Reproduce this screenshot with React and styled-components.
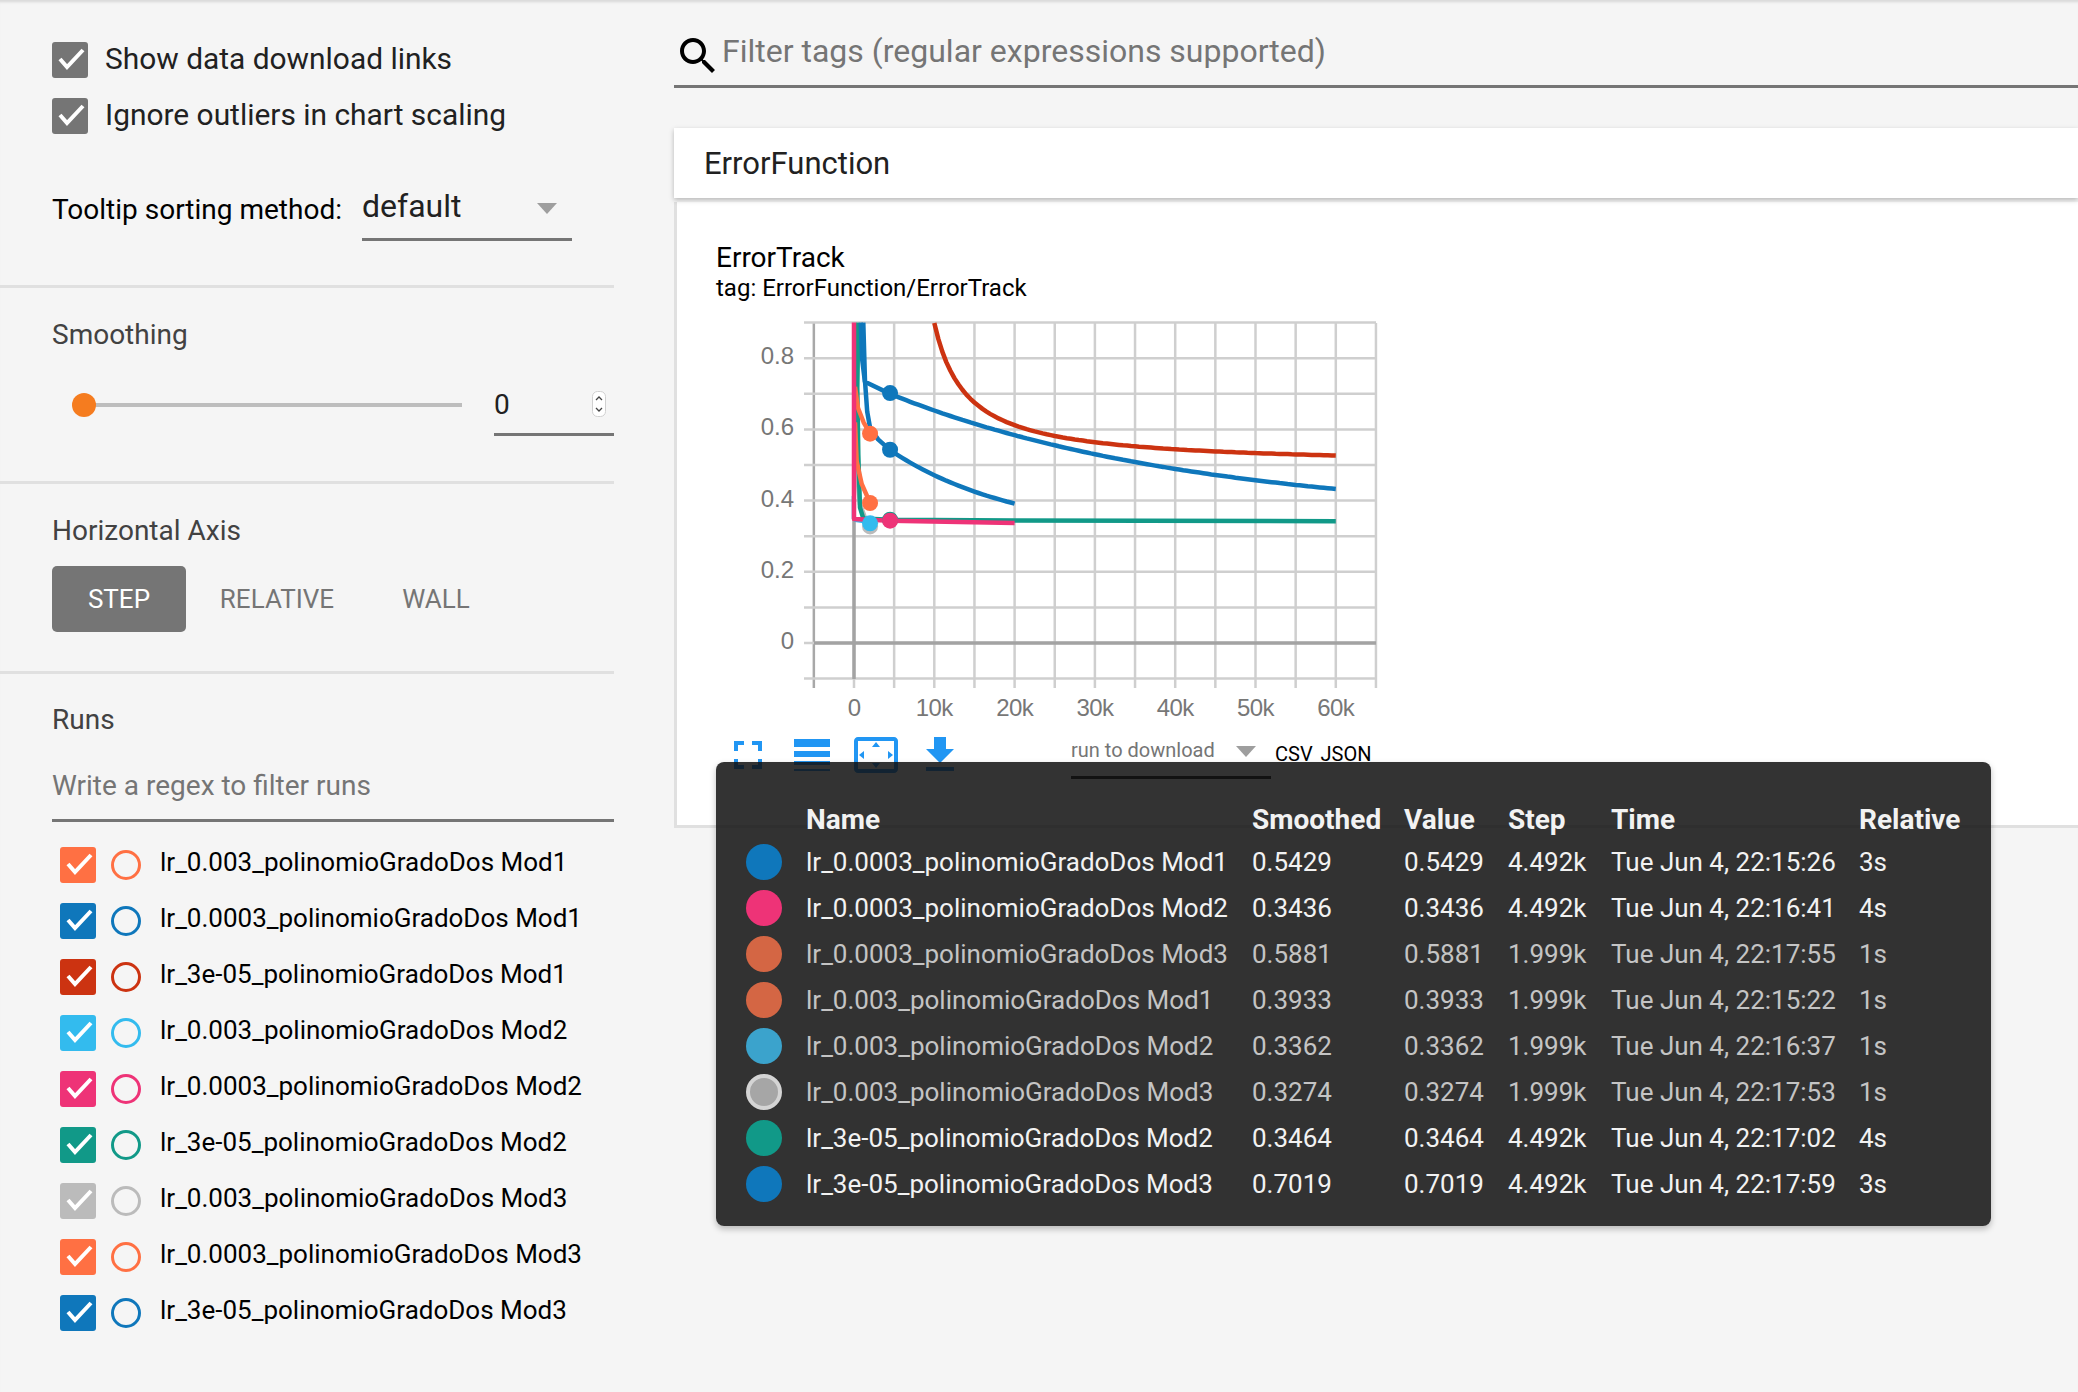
import React from 'react';
import styled, { createGlobalStyle } from 'styled-components';

const GlobalStyle = createGlobalStyle`
  html, body { margin: 0; padding: 0; background: #f5f5f5; overflow: hidden; }
  * { box-sizing: border-box; }
  body { font-family: Roboto, "Liberation Sans", sans-serif; }
`;

const COLORS = {
  orange: '#ff7043',
  blue: '#0f77bb',
  red: '#cc3311',
  sky: '#33bbee',
  pink: '#ee3377',
  teal: '#119988',
  grey: '#bbbbbb',
};

const RUNS = [
  ['lr_0.003_polinomioGradoDos Mod1', COLORS.orange],
  ['lr_0.0003_polinomioGradoDos Mod1', COLORS.blue],
  ['lr_3e-05_polinomioGradoDos Mod1', COLORS.red],
  ['lr_0.003_polinomioGradoDos Mod2', COLORS.sky],
  ['lr_0.0003_polinomioGradoDos Mod2', COLORS.pink],
  ['lr_3e-05_polinomioGradoDos Mod2', COLORS.teal],
  ['lr_0.003_polinomioGradoDos Mod3', COLORS.grey],
  ['lr_0.0003_polinomioGradoDos Mod3', COLORS.orange],
  ['lr_3e-05_polinomioGradoDos Mod3', COLORS.blue],
];

const ROWS = [
  { color: '#0f77bb', name: 'lr_0.0003_polinomioGradoDos Mod1', smoothed: '0.5429', value: '0.5429', step: '4.492k', time: 'Tue Jun 4, 22:15:26', rel: '3s' },
  { color: '#ee3377', name: 'lr_0.0003_polinomioGradoDos Mod2', smoothed: '0.3436', value: '0.3436', step: '4.492k', time: 'Tue Jun 4, 22:16:41', rel: '4s' },
  { color: '#d46644', dim: true, name: 'lr_0.0003_polinomioGradoDos Mod3', smoothed: '0.5881', value: '0.5881', step: '1.999k', time: 'Tue Jun 4, 22:17:55', rel: '1s' },
  { color: '#d46644', dim: true, name: 'lr_0.003_polinomioGradoDos Mod1', smoothed: '0.3933', value: '0.3933', step: '1.999k', time: 'Tue Jun 4, 22:15:22', rel: '1s' },
  { color: '#3ba3cc', dim: true, name: 'lr_0.003_polinomioGradoDos Mod2', smoothed: '0.3362', value: '0.3362', step: '1.999k', time: 'Tue Jun 4, 22:16:37', rel: '1s' },
  { color: '#a6a6a6', ring: true, dim: true, name: 'lr_0.003_polinomioGradoDos Mod3', smoothed: '0.3274', value: '0.3274', step: '1.999k', time: 'Tue Jun 4, 22:17:53', rel: '1s' },
  { color: '#119988', name: 'lr_3e-05_polinomioGradoDos Mod2', smoothed: '0.3464', value: '0.3464', step: '4.492k', time: 'Tue Jun 4, 22:17:02', rel: '4s' },
  { color: '#0f77bb', name: 'lr_3e-05_polinomioGradoDos Mod3', smoothed: '0.7019', value: '0.7019', step: '4.492k', time: 'Tue Jun 4, 22:17:59', rel: '3s' },
];

// sample a decay curve between two steps, so the long tails stay smooth
const sample = (from, to, fn) => {
  const out = [];
  for (let k = from; k <= to + 0.001; k += 0.5) out.push([k, fn(k)]);
  return out;
};

// series are [step in thousands, value]
const SERIES = [
  { color: COLORS.grey, pts: [[0.33, 0.49], [0.75, 0.39], [1.37, 0.352], [1.999, 0.3274]] },
  { color: COLORS.sky, width: 2, pts: [[-0.16, 0.413], [-0.16, 0.35], [0.12, 0.343], [1.999, 0.3362]] },
  { color: COLORS.teal, pts: [[0.54, 0.9], [0.41, 0.717], [0.54, 0.53], [0.75, 0.38], [1.16, 0.35], [4.492, 0.3464], [20, 0.344], [60, 0.342]] },
  {
    color: COLORS.blue,
    pts: [[0.85, 0.9], [1.0, 0.8], [1.36, 0.734], ...sample(4.5, 60, (k) => 0.35 + 0.393 * Math.exp(-k / 38.5))],
  },
  {
    color: COLORS.blue,
    pts: [[1.16, 0.9], [1.37, 0.736], [1.65, 0.65], [2, 0.604], [3, 0.572], ...sample(4.5, 20, (k) => 0.3 + 0.32 * Math.exp(-k / 16))],
  },
  { color: COLORS.orange, pts: [[0.12, 0.72], [0.5, 0.66], [1.2, 0.62], [1.999, 0.5881]] },
  { color: COLORS.orange, pts: [[0.12, 0.62], [0.34, 0.51], [0.96, 0.447], [1.999, 0.3933]] },
  { color: COLORS.red, pts: sample(10, 60, (k) => 0.497 + 1.607 / (k - 6)) },
  { color: COLORS.pink, pts: [[0, 0.9], [0, 0.348], [4.492, 0.3436], [20, 0.3367]] },
];

const DOTS = [
  [1.999, 0.3274, COLORS.grey],
  [4.492, 0.3464, COLORS.teal],
  [4.492, 0.7019, COLORS.blue],
  [4.492, 0.5429, COLORS.blue],
  [1.999, 0.5881, COLORS.orange],
  [1.999, 0.3933, COLORS.orange],
  [1.999, 0.3362, COLORS.sky],
  [4.492, 0.3436, COLORS.pink],
];

const sx = (k) => 98 + k * 8.03;
const sy = (v) => 332 - v * 356;

const linePath = (pts) => pts.map(([k, v], i) => `${i ? 'L' : 'M'}${sx(k).toFixed(1)} ${sy(v).toFixed(1)}`).join('');

const Page = styled.div`
  display: flex;
  width: 2078px;
  height: 1392px;
  background: #f5f5f5;
  box-shadow: inset 0 4px 3px -2px rgba(0, 0, 0, 0.12);
  overflow: hidden;
`;

const Sidebar = styled.aside`
  width: 614px;
  flex: none;
`;

const Section = styled.section`
  padding: ${(p) => p.$pad};
  border-bottom: ${(p) => (p.$last ? 'none' : '3px solid #e0e0e0')};
`;

const CheckRow = styled.label`
  display: flex;
  align-items: center;
  gap: 17px;
  height: 36px;
  margin-bottom: 20px;
  font-size: 29.9px;
  line-height: 34px;
  color: #212121;
`;

const CheckText = styled.span`
  padding-bottom: 2px;
`;

const Box = styled.span`
  width: 36px;
  height: 36px;
  flex: none;
  border-radius: 3px;
  background: ${(p) => p.$color};
  display: flex;
`;

const SortRow = styled.div`
  display: flex;
  align-items: flex-end;
  margin-top: 46px;
  height: 61px;
`;

const SortLabel = styled.span`
  font-size: 28px;
  color: #000;
  width: 310px;
  line-height: 36px;
  padding-bottom: 13px;
`;

const SelectBox = styled.div`
  width: ${(p) => p.$width};
  height: ${(p) => p.$height};
  border-bottom: 3px solid ${(p) => p.$line};
  display: flex;
  align-items: center;
  justify-content: space-between;
  color: ${(p) => p.$color};
  font-size: ${(p) => p.$size};
  padding: ${(p) => p.$pad};
`;

const Caret = styled.span`
  width: 0;
  height: 0;
  margin-top: 4px;
  border-left: 10px solid transparent;
  border-right: 10px solid transparent;
  border-top: 11px solid #9e9e9e;
`;

const SectionTitle = styled.div`
  font-size: 28px;
  line-height: 38px;
  margin-bottom: -2px;
  color: #424242;
`;

const SliderRow = styled.div`
  display: flex;
  align-items: flex-start;
  margin-top: 28px;
  height: 56px;
`;

const SliderTrack = styled.div`
  width: 410px;
  height: 50px;
  padding-left: 32px;
  display: flex;
  align-items: center;
  position: relative;

  &::before {
    content: '';
    flex: 1;
    height: 4px;
    background: #bdbdbd;
  }
`;

const SliderThumb = styled.span`
  position: absolute;
  left: 20px;
  top: 13px;
  width: 24px;
  height: 24px;
  border-radius: 50%;
  background: #f57c1f;
`;

const NumberBox = styled.div`
  position: relative;
  width: 120px;
  height: 56px;
  margin-left: 32px;
  border-bottom: 3px solid #757575;
  font-size: 28px;
  line-height: 50px;
  padding-left: 0;
  color: #212121;
`;

const Spinner = styled.svg`
  position: absolute;
  right: 8px;
  top: 11px;
  width: 14px;
  height: 26px;
`;

const ToggleRow = styled.div`
  display: flex;
  margin-top: 18px;
  height: 66px;
`;

const Toggle = styled.div`
  width: ${(p) => p.$width};
  height: 66px;
  border-radius: 5px;
  background: ${(p) => (p.$active ? '#757575' : 'transparent')};
  color: ${(p) => (p.$active ? '#fff' : '#757575')};
  font-size: 26px;
  display: flex;
  align-items: center;
  justify-content: center;
`;

const RegexInput = styled.div`
  margin-top: 22px;
  height: 63px;
  border-bottom: 3px solid #757575;
  font-size: 28px;
  line-height: 54px;
  color: #757575;
`;

const RunList = styled.div`
  margin: 25px 0 0 8px;
  display: flex;
  flex-direction: column;
  gap: 20px;
`;

const RunRow = styled.div`
  display: flex;
  align-items: center;
  height: 36px;
`;

const Radio = styled.span`
  width: 30px;
  height: 30px;
  margin: 0 19px 0 15px;
  border-radius: 50%;
  border: 3px solid ${(p) => p.$color};
`;

const RunName = styled.span`
  font-size: 26px;
  line-height: 30px;
  color: #000;
  padding-bottom: 6px;
  white-space: nowrap;
`;

const Main = styled.main`
  flex: 1;
  min-width: 0;
  margin-left: 60px;
`;

const SearchBar = styled.div`
  height: 88px;
  padding-top: 32px;
  border-bottom: 3px solid #757575;
  display: flex;
  align-items: flex-start;
`;

const SearchText = styled.span`
  font-size: 32px;
  line-height: 38px;
  color: #757575;
`;

const GroupHeader = styled.div`
  margin-top: 40px;
  height: 70px;
  background: #fff;
  padding-left: 30px;
  font-size: 31px;
  line-height: 71px;
  color: #212121;
  position: relative;
  z-index: 1;
  box-shadow: 0 2px 5px rgba(0, 0, 0, 0.26);
`;

const ChartCard = styled.div`
  position: relative;
  margin-top: 4px;
  height: 626px;
  background: #fff;
  border-left: 3px solid #e0e0e0;
  border-bottom: 3px solid #e0e0e0;
  padding: 38px 0 0 39px;
`;

const ChartTitle = styled.div`
  font-size: 28px;
  line-height: 36px;
  color: #000;
`;

const ChartTag = styled.div`
  font-size: 24px;
  line-height: 24px;
  color: #000;
`;

const ChartSvg = styled.svg`
  display: block;
  margin: 11px 0 0 40px;
  width: 640px;
  height: 420px;
`;

const Toolbar = styled.div`
  display: flex;
  align-items: flex-start;
  margin-left: 8px;
  height: 48px;
  gap: 16px;
`;

const ToolIcon = styled.svg`
  width: 48px;
  height: 48px;
  flex: none;
  fill: #2196f3;
`;

const DownloadGroup = styled.div`
  display: flex;
  align-items: flex-start;
  margin-left: 91px;
`;

const DownloadLinks = styled.div`
  margin: 11px 0 0 4px;
  font-size: 20px;
  line-height: 24px;
  color: #000;
  word-spacing: 3px;
`;

const Tooltip = styled.div`
  position: absolute;
  left: 39px;
  top: 560px;
  width: 1275px;
  height: 464px;
  padding: 38px 0 0 30px;
  border-radius: 8px;
  background: rgba(15, 15, 15, 0.85);
  box-shadow: 0 3px 6px rgba(0, 0, 0, 0.25);
  z-index: 2;
`;

const TipRow = styled.div`
  display: grid;
  grid-template-columns: 60px 446px 152px 104px 103px 248px auto;
  align-items: center;
  height: ${(p) => (p.$head ? '39px' : '46px')};
  font-size: ${(p) => (p.$head ? '28px' : '26px')};
  font-weight: ${(p) => (p.$head ? 700 : 400)};
  color: ${(p) => (p.$dim ? '#c4c4c4' : '#f2f2f2')};
  white-space: nowrap;
`;

const Swatch = styled.span`
  width: 36px;
  height: 36px;
  border-radius: 50%;
  background: ${(p) => p.$color};
  border: ${(p) => (p.$ring ? '4px solid #d4d4d4' : 'none')};
`;

const Check = () => (
  <svg width="36" height="36" viewBox="0 0 36 36">
    <polyline points="8,17 15,25 31,8" fill="none" stroke="#fff" strokeWidth="4" />
  </svg>
);

const Chart = () => {
  const vs = [];
  for (let k = -5; k <= 65; k += 5) vs.push(k);
  const hs = [];
  for (let i = -1; i <= 9; i++) hs.push(i / 10);
  return (
    <ChartSvg viewBox="0 0 640 420">
      {vs.map((k) => (
        <line key={k} x1={sx(k)} x2={sx(k)} y1={12} y2={377} stroke={k === -5 ? '#a8a8a8' : '#cfcfcf'} strokeWidth="2.5" />
      ))}
      {hs.map((v) => (
        <line key={v} x1="48" x2="620" y1={sy(v)} y2={sy(v)} stroke="#cfcfcf" strokeWidth="2.5" />
      ))}
      <line x1={sx(0)} x2={sx(0)} y1="12" y2="368" stroke="#a3a3a3" strokeWidth="3.5" />
      <line x1="58" x2="620" y1={sy(0)} y2={sy(0)} stroke="#a3a3a3" strokeWidth="3.5" />
      {SERIES.map((s, i) => (
        <path key={i} d={linePath(s.pts)} fill="none" stroke={s.color} strokeWidth={s.width || 4.5} strokeLinejoin="round" />
      ))}
      {DOTS.map(([k, v, c], i) => (
        <circle key={i} cx={sx(k)} cy={sy(v)} r="8" fill={c} />
      ))}
      {[0, 0.2, 0.4, 0.6, 0.8].map((v) => (
        <text key={v} x="38" y={sy(v) + 6} textAnchor="end" fontFamily="Liberation Sans" fontSize="24" fill="#777777">{v}</text>
      ))}
      {[0, 10, 20, 30, 40, 50, 60].map((k) => (
        <text key={k} x={sx(k)} y="405" textAnchor="middle" fontFamily="Liberation Sans" fontSize="24" letterSpacing="-0.6" fill="#777777">{k ? `${k}k` : '0'}</text>
      ))}
    </ChartSvg>
  );
};

const App = () => (
  <Page>
    <GlobalStyle />
    <Sidebar>
      <Section $pad="42px 0 44px 52px">
        <CheckRow><Box $color="#757575"><Check /></Box><CheckText>Show data download links</CheckText></CheckRow>
        <CheckRow><Box $color="#757575"><Check /></Box><CheckText>Ignore outliers in chart scaling</CheckText></CheckRow>
        <SortRow>
          <SortLabel>Tooltip sorting method:</SortLabel>
          <SelectBox $width="210px" $height="61px" $line="#757575" $color="#212121" $size="32px" $pad="0 15px 6px 0">
            default<Caret />
          </SelectBox>
        </SortRow>
      </Section>
      <Section $pad="28px 0 45px 52px">
        <SectionTitle>Smoothing</SectionTitle>
        <SliderRow>
          <SliderTrack><SliderThumb /></SliderTrack>
          <NumberBox>
            0
            <Spinner viewBox="0 0 14 26">
              <rect x="0.5" y="0.5" width="13" height="25" rx="5" fill="#fff" stroke="#d0d0d0" />
              <path d="M4 9l3-3 3 3M4 17l3 3 3-3" fill="none" stroke="#444" strokeWidth="1.3" />
            </Spinner>
          </NumberBox>
        </SliderRow>
      </Section>
      <Section $pad="28px 0 39px 52px">
        <SectionTitle>Horizontal Axis</SectionTitle>
        <ToggleRow>
          <Toggle $active $width="134px">STEP</Toggle>
          <Toggle $width="182px">RELATIVE</Toggle>
          <Toggle $width="136px">WALL</Toggle>
        </ToggleRow>
      </Section>
      <Section $last $pad="27px 0 0 52px">
        <SectionTitle>Runs</SectionTitle>
        <RegexInput>Write a regex to filter runs</RegexInput>
        <RunList>
          {RUNS.map(([name, color]) => (
            <RunRow key={name}>
              <Box $color={color}><Check /></Box>
              <Radio $color={color} />
              <RunName>{name}</RunName>
            </RunRow>
          ))}
        </RunList>
      </Section>
    </Sidebar>
    <Main>
      <SearchBar>
        <svg width="48" height="48" viewBox="0 0 24 24" fill="#000">
          <path d="M15.5 14h-.79l-.28-.27C15.41 12.59 16 11.11 16 9.5 16 5.91 13.09 3 9.5 3S3 5.91 3 9.5 5.91 16 9.5 16c1.61 0 3.09-.59 4.23-1.57l.27.28v.79l5 4.99L20.49 19l-4.99-5zm-6 0C7.01 14 5 11.99 5 9.5S7.01 5 9.5 5 14 7.01 14 9.5 11.99 14 9.5 14z" />
        </svg>
        <SearchText>Filter tags (regular expressions supported)</SearchText>
      </SearchBar>
      <GroupHeader>ErrorFunction</GroupHeader>
      <ChartCard>
        <ChartTitle>ErrorTrack</ChartTitle>
        <ChartTag>tag: ErrorFunction/ErrorTrack</ChartTag>
        <Chart />
        <Toolbar>
          <ToolIcon viewBox="0 0 24 24"><path d="M7 14H5v5h5v-2H7v-3zm-2-4h2V7h3V5H5v5zm12 7h-3v2h5v-5h-2v3zM14 7h3v3h2V5h-5v2z" /></ToolIcon>
          <ToolIcon viewBox="0 0 24 24"><path d="M3 17h18v-2H3v2zm0 3h18v-1H3v1zm0-7h18v-3H3v3zm0-9v4h18V4H3z" /></ToolIcon>
          <ToolIcon viewBox="0 0 24 24"><path d="M12.01 5.5L10 8h4l-1.99-2.5zM18 10v4l2.5-1.99L18 10zM6 10l-2.5 2.01L6 14v-4zm8 6h-4l2.01 2.5L14 16zm7-13H3c-1.1 0-2 .9-2 2v14c0 1.1.9 2 2 2h18c1.1 0 2-.9 2-2V5c0-1.1-.9-2-2-2zm0 16.01H3V4.99h18v14.02z" /></ToolIcon>
          <ToolIcon viewBox="0 0 24 24"><path d="M19 9h-4V3H9v6H5l7 7 7-7zM5 18v2h14v-2H5z" /></ToolIcon>
          <DownloadGroup>
            <SelectBox $width="200px" $height="48px" $line="#212121" $color="#757575" $size="20px" $pad="0 15px 8px 0">
              run to download<Caret />
            </SelectBox>
            <DownloadLinks>CSV JSON</DownloadLinks>
          </DownloadGroup>
        </Toolbar>
        <Tooltip>
          <TipRow $head>
            <span />
            <span>Name</span>
            <span>Smoothed</span>
            <span>Value</span>
            <span>Step</span>
            <span>Time</span>
            <span>Relative</span>
          </TipRow>
          {ROWS.map((r) => (
            <TipRow key={r.name} $dim={r.dim}>
              <Swatch $color={r.color} $ring={r.ring} />
              <span>{r.name}</span>
              <span>{r.smoothed}</span>
              <span>{r.value}</span>
              <span>{r.step}</span>
              <span>{r.time}</span>
              <span>{r.rel}</span>
            </TipRow>
          ))}
        </Tooltip>
      </ChartCard>
    </Main>
  </Page>
);

export default App;
